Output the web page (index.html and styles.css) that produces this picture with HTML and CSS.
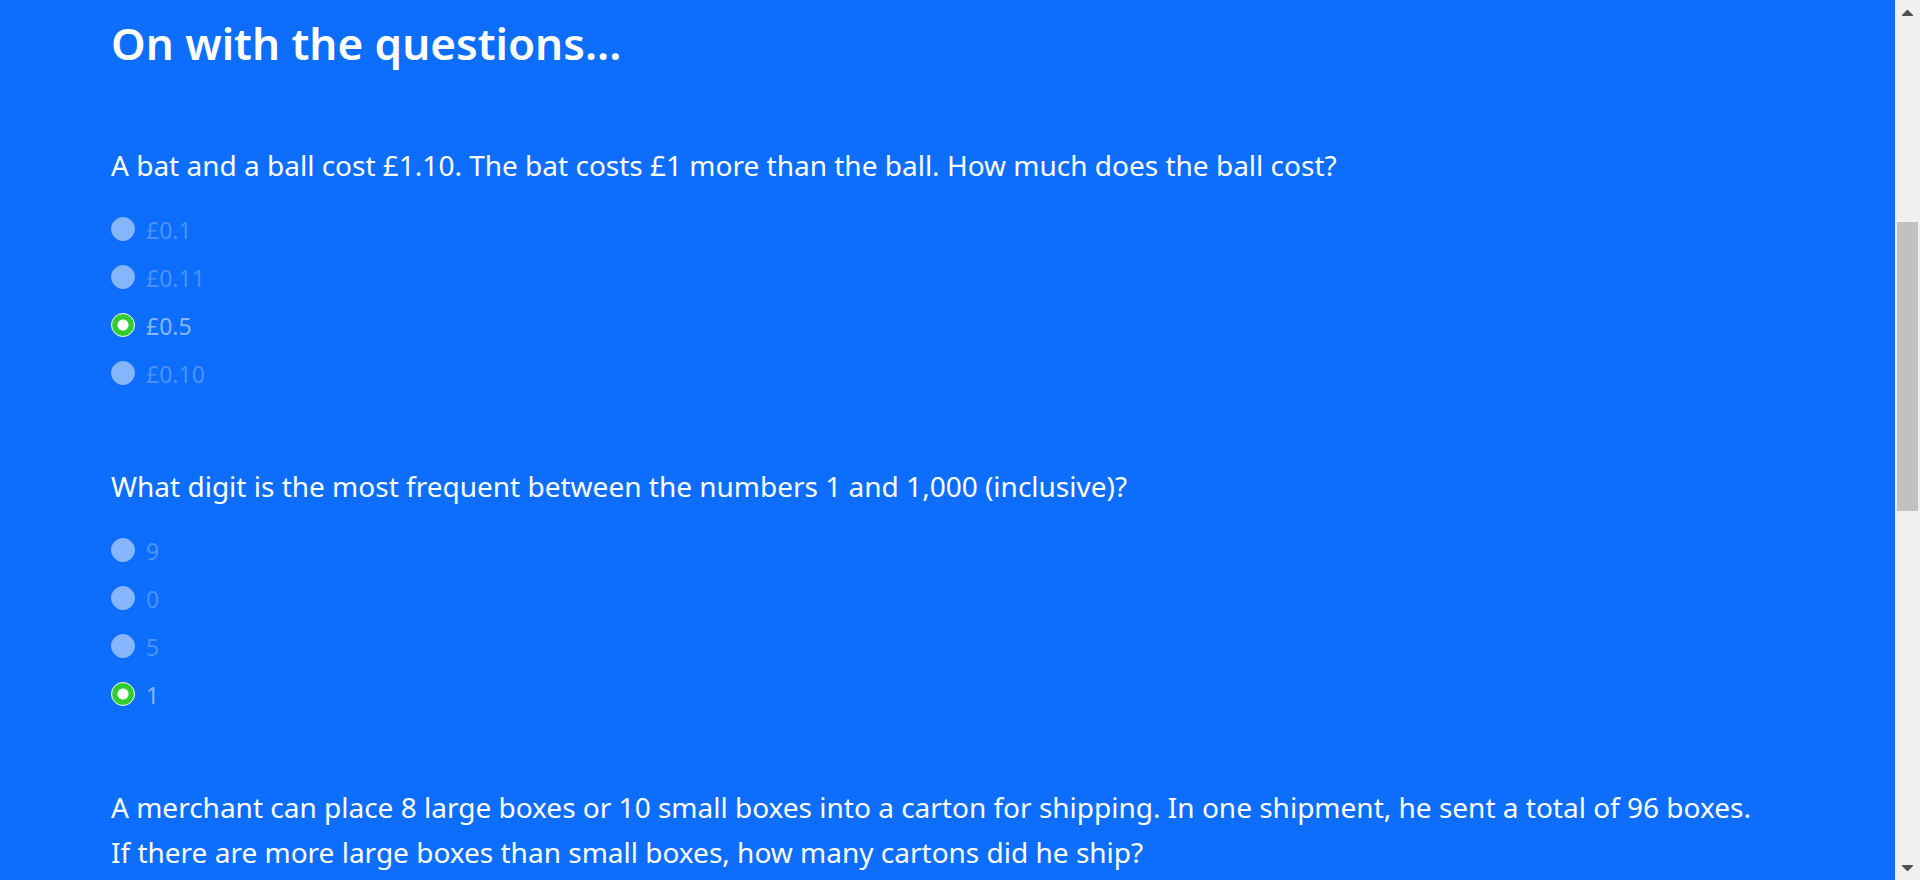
FILE: index.html
```html
<!DOCTYPE html>
<html lang="en">
<head>
<meta charset="utf-8">
<meta name="viewport" content="width=device-width, initial-scale=1">
<title>On with the questions...</title>
<link rel="stylesheet" href="styles.css">
</head>
<body>
<div class="page">
  <main class="quiz">
    <h1 class="title">On with the questions...</h1>
    <fieldset class="question">
      <legend class="prompt">A bat and a ball cost £1.10. The bat costs £1 more than the ball. How much does the ball cost?</legend>
      <div class="options">
        <div class="option"><input class="radio" type="radio" name="q1" id="q1a" disabled><label class="label" for="q1a">£0.1</label></div>
        <div class="option"><input class="radio" type="radio" name="q1" id="q1b" disabled><label class="label" for="q1b">£0.11</label></div>
        <div class="option"><input class="radio" type="radio" name="q1" id="q1c" checked><label class="label" for="q1c">£0.5</label></div>
        <div class="option"><input class="radio" type="radio" name="q1" id="q1d" disabled><label class="label" for="q1d">£0.10</label></div>
      </div>
    </fieldset>
    <fieldset class="question">
      <legend class="prompt">What digit is the most frequent between the numbers 1 and 1,000 (inclusive)?</legend>
      <div class="options">
        <div class="option"><input class="radio" type="radio" name="q2" id="q2a" disabled><label class="label" for="q2a">9</label></div>
        <div class="option"><input class="radio" type="radio" name="q2" id="q2b" disabled><label class="label" for="q2b">0</label></div>
        <div class="option"><input class="radio" type="radio" name="q2" id="q2c" disabled><label class="label" for="q2c">5</label></div>
        <div class="option"><input class="radio" type="radio" name="q2" id="q2d" checked><label class="label" for="q2d">1</label></div>
      </div>
    </fieldset>
    <p class="prompt">A merchant can place 8 large boxes or 10 small boxes into a carton for shipping. In one shipment, he sent a total of 96 boxes. If there are more large boxes than small boxes, how many cartons did he ship?</p>
  </main>
  <div class="scrollbar" aria-hidden="true">
    <svg class="arrow" viewBox="0 0 11 6"><path d="M5 0h1l5 5v1H0V5z" fill="#505050"/></svg>
    <div class="track"><div class="thumb"></div></div>
    <svg class="arrow" viewBox="0 0 11 6"><path d="M0 0h11v1L6 6H5L0 1z" fill="#505050"/></svg>
  </div>
</div>
</body>
</html>
```
FILE: styles.css
```css
* { box-sizing: border-box; }
body {
  margin: 0;
  background: #0d6efd;
  color: #fff;
  font-family: "Segoe UI", "Noto Sans", "Open Sans", sans-serif;
}
.page { display: flex; min-height: 100vh; }
.quiz { flex: 1; min-width: 0; padding: 14px 125px 0 111px; }
.title { margin: 0 0 71px; font-size: 44px; line-height: 58px; font-weight: 600; }
.question { margin: 0 0 73px; padding: 0; border: 0; min-width: 0; }
.prompt { margin: 0; padding: 0; font-size: 28px; line-height: 45px; }
.options { display: grid; gap: 12px; padding-top: 23px; }
.option { display: flex; align-items: center; gap: 11px; font-size: 23px; line-height: 34px; }
.radio {
  appearance: none;
  flex: none;
  width: 24px;
  height: 24px;
  margin: 0;
  border: 1px solid #fff;
  border-radius: 50%;
  background: #fff;
}
.radio:disabled { opacity: 0.5; }
.radio:checked { background: radial-gradient(circle, #fff 5px, #32cd32 6px); }
.label { padding-top: 2px; color: #86b7fe; }
.radio:disabled + .label { color: #4a93fe; }
.scrollbar {
  flex: none;
  display: flex;
  flex-direction: column;
  align-items: center;
  gap: 9px;
  width: 25px;
  padding: 10px 0 9px;
  background: #f0f0f0;
}
.arrow { width: 11px; height: 6px; flex: none; }
.track { flex: 1; width: 21px; }
.thumb { height: 289px; margin-top: 197px; background: #c1c1c1; }
```
